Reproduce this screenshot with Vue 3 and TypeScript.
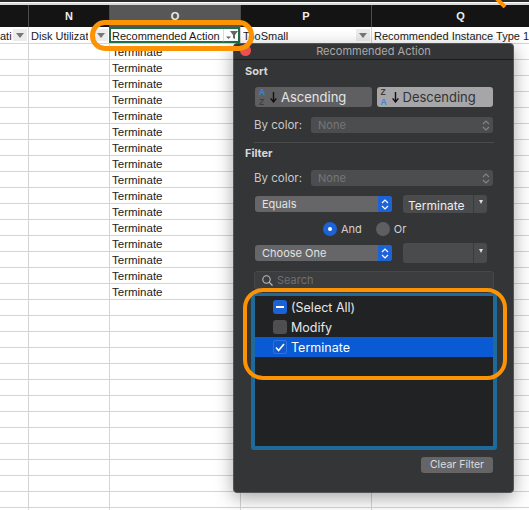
<script setup lang="ts">
const columns = ['', 'N', 'O', 'P', 'Q']
const filters = [
  { text: 'ati', icon: true },
  { text: 'Disk Utilizat', icon: true },
  { text: 'Recommended Action', icon: false },
  { text: 'TooSmall', icon: true },
  { text: 'Recommended Instance Type 1', icon: false },
]

// 16 rows of data, the rest of the sheet stays empty
const rows = Array.from({ length: 30 }, (_, i) => (i < 16 ? 'Terminate' : ''))
</script>

<template>
  <div class="screen">
    <div class="window-edge"></div>

    <div class="sheet-row header-row">
      <div v-for="col in columns" :key="col" class="col-head" :class="{ active: col === 'O' }">{{ col }}</div>
    </div>

    <div class="sheet-row filter-row">
      <div v-for="f in filters" :key="f.text" class="filter-cell" :class="{ selected: f.text === 'Recommended Action' }">
        <span class="filter-text">{{ f.text }}</span>
        <span v-if="f.icon" class="drop-btn"><i class="tri"></i></span>
        <span v-if="f.text === 'Recommended Action'" class="funnel-btn">
          <svg width="16" height="13" viewBox="0 0 16 13">
            <path d="M0 0V13" stroke="#b9b9b9" />
            <path d="M3 7.5h5l-2.5 2.5z" fill="#666" />
            <path d="M7 2h8l-3 4v4l-2-1V6z" fill="#666" />
          </svg>
        </span>
      </div>
    </div>

    <div v-for="(row, i) in rows" :key="i" class="sheet-row data-row">
      <div class="cell"></div>
      <div class="cell"></div>
      <div class="cell">{{ row }}</div>
      <div class="cell"></div>
      <div class="cell"></div>
    </div>

    <div class="panel">
      <div class="panel-title">Recommended Action</div>
      <div class="panel-body">
        <div class="section-label">Sort</div>
        <div class="sort-buttons">
          <div class="sort-btn">
            <span class="az"><b class="blue">A</b><b class="dim">Z</b></span>
            <svg class="sort-arrow" width="7" height="11" viewBox="0 0 7 11"><path d="M3.5 0V9M.6 6.4l2.9 3.6 2.9-3.6" fill="none" stroke="#111" stroke-width="1.4" /></svg>
            <span>Ascending</span>
          </div>
          <div class="sort-btn on">
            <span class="az"><b class="dim2">Z</b><b class="blue">A</b></span>
            <svg class="sort-arrow" width="7" height="11" viewBox="0 0 7 11"><path d="M3.5 0V9M.6 6.4l2.9 3.6 2.9-3.6" fill="none" stroke="#111" stroke-width="1.4" /></svg>
            <span>Descending</span>
          </div>
        </div>
        <div class="color-row">
          <span class="color-label">By color:</span>
          <div class="disabled-select">
            None
            <svg width="8" height="11" viewBox="0 0 8 11"><path d="M1 4l3-3 3 3M1 7l3 3 3-3" fill="none" stroke="#858585" stroke-width="1.1" /></svg>
          </div>
        </div>

        <div class="divider"></div>

        <div class="section-label filter-label">Filter</div>
        <div class="color-row filter-color">
          <span class="color-label">By color:</span>
          <div class="disabled-select">
            None
            <svg width="8" height="11" viewBox="0 0 8 11"><path d="M1 4l3-3 3 3M1 7l3 3 3-3" fill="none" stroke="#858585" stroke-width="1.1" /></svg>
          </div>
        </div>

        <div class="criteria-row">
          <div class="blue-select">
            <span class="select-text">Equals</span>
            <span class="stepper"><svg width="8" height="11" viewBox="0 0 8 11"><path d="M1 4l3-3 3 3M1 7l3 3 3-3" fill="none" stroke="#fff" stroke-width="1.2" /></svg></span>
          </div>
          <div class="combo"><span class="combo-text">Terminate</span><span class="combo-arrow"><i></i></span></div>
        </div>

        <div class="radio-row">
          <span class="radio checked"></span><span class="radio-label">And</span>
          <span class="radio"></span><span class="radio-label">Or</span>
        </div>

        <div class="criteria-row second">
          <div class="blue-select">
            <span class="select-text">Choose One</span>
            <span class="stepper"><svg width="8" height="11" viewBox="0 0 8 11"><path d="M1 4l3-3 3 3M1 7l3 3 3-3" fill="none" stroke="#fff" stroke-width="1.2" /></svg></span>
          </div>
          <div class="combo empty"><span class="combo-text"></span><span class="combo-arrow"><i></i></span></div>
        </div>

        <div class="search">
          <svg width="11" height="11" viewBox="0 0 11 11"><circle cx="4.5" cy="4.5" r="3.7" fill="none" stroke="#bdbdbd" stroke-width="1.1" /><path d="M7.3 7.3L10.5 10.5" stroke="#bdbdbd" stroke-width="1.2" /></svg>
          <span>Search</span>
        </div>

        <div class="value-list">
          <div class="value-row">
            <span class="check mixed"><i></i></span>(Select All)
          </div>
          <div class="value-row">
            <span class="check off"></span>Modify
          </div>
          <div class="value-row picked">
            <span class="check ticked">
              <svg width="10" height="9" viewBox="0 0 10 9"><path d="M1 4.6l2.6 3L9 1" fill="none" stroke="#fff" stroke-width="1.6" /></svg>
            </span>Terminate
          </div>
        </div>

        <div class="panel-foot">
          <div class="clear-btn">Clear Filter</div>
        </div>
      </div>
    </div>

    <div class="red-dot"></div>
    <div class="ring ring-head"></div>
    <div class="ring ring-list"></div>
    <svg class="stray-mark" width="14" height="8" viewBox="0 0 14 8"><path d="M1 -2L10 7" stroke="#fb9304" stroke-width="4" /></svg>
  </div>
</template>

<style>
html,
body {
  margin: 0;
  background: #fff;
}
</style>

<style scoped>
.screen {
  position: relative;
  width: 529px;
  height: 510px;
  overflow: hidden;
  background: #fff;
  font-family: "Liberation Sans", Arial, sans-serif;
}

.window-edge {
  height: 2px;
  margin-top: 3px;
  background: #d9d9d9;
  box-shadow: 0 -3px 0 #2b2b2b;
}

.sheet-row {
  display: grid;
  grid-template-columns: 29px 81px 131px 131px 178px;
}

.header-row {
  height: 22px;
  background: #141414;
}

.col-head {
  display: flex;
  align-items: center;
  justify-content: center;
  border-right: 1px solid #4a4a4a;
  color: #eee;
  font-size: 11px;
  font-weight: 700;
}

.col-head.active {
  background: #575757;
}

.filter-row {
  height: 17px;
}

.filter-cell {
  display: flex;
  align-items: center;
  justify-content: space-between;
  min-width: 0;
  height: 17px;
  padding-left: 2px;
  box-sizing: border-box;
  overflow: hidden;
  border-right: 1px solid #d4d4d4;
  border-bottom: 1px solid #d4d4d4;
  color: #1a1a1a;
  font-size: 11px;
  white-space: nowrap;
}

.filter-cell:first-child {
  padding-left: 0;
}

.filter-cell.selected {
  margin-left: -1px;
  padding-left: 3px;
  box-shadow: inset 0 0 0 2px #1f7048;
}

.filter-text {
  padding-top: 1px;
  overflow: hidden;
}

.drop-btn {
  display: flex;
  flex: none;
  align-items: center;
  justify-content: center;
  width: 14px;
  height: 12px;
  margin-right: 1px;
  background: #ececec;
}

.tri {
  width: 0;
  height: 0;
  border-top: 5px solid #777;
  border-right: 4px solid transparent;
  border-left: 4px solid transparent;
}

.funnel-btn {
  display: flex;
  flex: none;
  margin-right: 1px;
}

.data-row {
  height: 16px;
}

.cell {
  height: 16px;
  padding-left: 2px;
  box-sizing: border-box;
  border-right: 1px solid #d4d4d4;
  border-bottom: 1px solid #d4d4d4;
  color: #222;
  font-size: 11.5px;
  line-height: 16px;
}

.panel {
  position: absolute;
  top: 43px;
  left: 233px;
  width: 281px;
  height: 450px;
  box-sizing: border-box;
  border: 1px solid #555;
  border-radius: 4px;
  background: #343537;
  box-shadow: 0 5px 18px rgba(0, 0, 0, 0.35);
  color: #ddd;
  font-family: Inter, "Liberation Sans", sans-serif;
}

.panel-title {
  height: 15px;
  border-bottom: 1px solid #1c1c1c;
  color: #aaa;
  font-size: 11px;
  line-height: 15px;
  text-align: center;
}

.panel-body {
  padding: 0 20px 0 21px;
}

.section-label {
  margin-left: -10px;
  padding-top: 5px;
  color: #d8d8d8;
  font-size: 11px;
  font-weight: 700;
  line-height: 13px;
}

.filter-label {
  padding-top: 4px;
}

.sort-buttons {
  display: flex;
  gap: 5px;
  margin-top: 9px;
}

.sort-btn {
  display: flex;
  flex: 1;
  align-items: center;
  height: 20px;
  padding-left: 4px;
  border-radius: 3px;
  background: #5f5f61;
  color: #e4e4e4;
  font-size: 13px;
}

.sort-btn.on {
  background: #a6a6a8;
  color: #333;
}

.az {
  display: flex;
  flex-direction: column;
  width: 10px;
  font-family: "Liberation Sans", sans-serif;
  font-size: 8.5px;
  line-height: 10px;
}

.az b {
  font-weight: 700;
}

.blue {
  color: #3f82d8;
}

.dim {
  color: #3f3f41;
}

.dim2 {
  color: #3c3c3e;
}

.sort-arrow {
  margin: 0 4px 0 1px;
}

.color-row {
  display: flex;
  align-items: center;
  margin: 10px 0 0 -1px;
}

.filter-color {
  margin-top: 10px;
}

.color-label {
  width: 57px;
  color: #c9c9c9;
  font-size: 11.5px;
}

.disabled-select {
  display: flex;
  flex: 1;
  align-items: center;
  justify-content: space-between;
  height: 16px;
  padding: 0 3px 0 7px;
  border-radius: 3px;
  background: #4c4d4f;
  color: #777;
  font-size: 11px;
}

.divider {
  height: 1px;
  margin: 9px -1px 0;
  background: #4a4b4d;
}

.criteria-row {
  display: flex;
  align-items: center;
  gap: 11px;
  height: 18px;
  margin-top: 9px;
}

.criteria-row.second {
  height: 20px;
  margin-top: 7px;
}

.blue-select {
  display: flex;
  align-items: center;
  justify-content: space-between;
  width: 137px;
  height: 16px;
  overflow: hidden;
  border-radius: 3px;
  background: #666668;
  color: #e2e2e2;
  font-size: 11px;
}

.select-text {
  padding-left: 7px;
}

.stepper {
  display: flex;
  align-items: center;
  justify-content: center;
  width: 14px;
  height: 16px;
  background: #1c63d8;
}

.combo {
  display: flex;
  align-items: stretch;
  width: 84px;
  height: 100%;
  overflow: hidden;
  border-radius: 3px;
  background: #4a4b4d;
  color: #eee;
  font-size: 12px;
}

.combo-text {
  flex: 1;
  padding-left: 5px;
  line-height: 21px;
}

.combo-arrow {
  display: flex;
  align-items: center;
  justify-content: center;
  width: 13px;
  border-left: 1px solid #3a3b3d;
}

.combo-arrow i {
  width: 0;
  height: 0;
  margin-top: -4px;
  border-top: 4px solid #ddd;
  border-right: 2.5px solid transparent;
  border-left: 2.5px solid transparent;
}

.radio-row {
  display: flex;
  align-items: center;
  height: 14px;
  margin-top: 9px;
  padding-left: 68px;
  color: #d0d0d0;
  font-size: 11px;
}

.radio {
  position: relative;
  flex: none;
  width: 14px;
  height: 14px;
  border-radius: 50%;
  background: #5f5f61;
}

.radio.checked {
  background: #1c63d8;
}

.radio.checked::after {
  content: "";
  position: absolute;
  top: 5px;
  left: 5px;
  width: 4px;
  height: 4px;
  border-radius: 50%;
  background: #fff;
}

.radio-label {
  margin-left: 4px;
  margin-right: 14px;
}

.search {
  display: flex;
  align-items: center;
  gap: 4px;
  height: 18px;
  margin: 8px -1px 0;
  padding-left: 7px;
  box-sizing: border-box;
  border: 1px solid #464749;
  border-radius: 3px;
  background: #3c3d3f;
  color: #6f7072;
  font-size: 11px;
}

.value-list {
  box-sizing: border-box;
  height: 157px;
  margin: 4px -4px 0;
  padding-top: 1px;
  border: 4px solid #1f6a9b;
  border-top-width: 3px;
  border-radius: 3px;
  background: #212224;
  color: #e6e6e6;
  font-size: 12.5px;
}

.value-row {
  display: flex;
  align-items: center;
  height: 20px;
  padding-left: 18px;
}

.value-row.picked {
  background: #0a5ad4;
  color: #fff;
}

.check {
  display: flex;
  flex: none;
  align-items: center;
  justify-content: center;
  width: 14px;
  height: 14px;
  margin-right: 4px;
  border-radius: 3px;
  background: #1a62d6;
}

.check.off {
  background: #4f4f51;
}

.check.ticked {
  background: #1059cf;
  box-shadow: inset 0 0 0 1px #2f74de;
}

.check.mixed i {
  width: 8px;
  height: 2px;
  background: #fff;
}

.panel-foot {
  display: flex;
  justify-content: flex-end;
  margin-top: 7px;
}

.clear-btn {
  width: 72px;
  height: 16px;
  border-radius: 3px;
  background: #656567;
  color: #ddd;
  font-size: 10.5px;
  line-height: 16px;
  text-align: center;
}

.red-dot {
  position: absolute;
  top: 45px;
  left: 240px;
  width: 11px;
  height: 11px;
  border-radius: 50%;
  background: #e9534f;
}

.ring {
  position: absolute;
  box-sizing: border-box;
  border: 5px solid #fb9304;
  pointer-events: none;
}

.ring-head {
  top: 20px;
  left: 90px;
  width: 164px;
  height: 31px;
  border-radius: 15px;
}

.ring-list {
  top: 288px;
  left: 243px;
  width: 264px;
  height: 92px;
  border-width: 4px;
  border-radius: 20px;
}

.stray-mark {
  position: absolute;
  top: 0;
  left: 495px;
}
</style>
